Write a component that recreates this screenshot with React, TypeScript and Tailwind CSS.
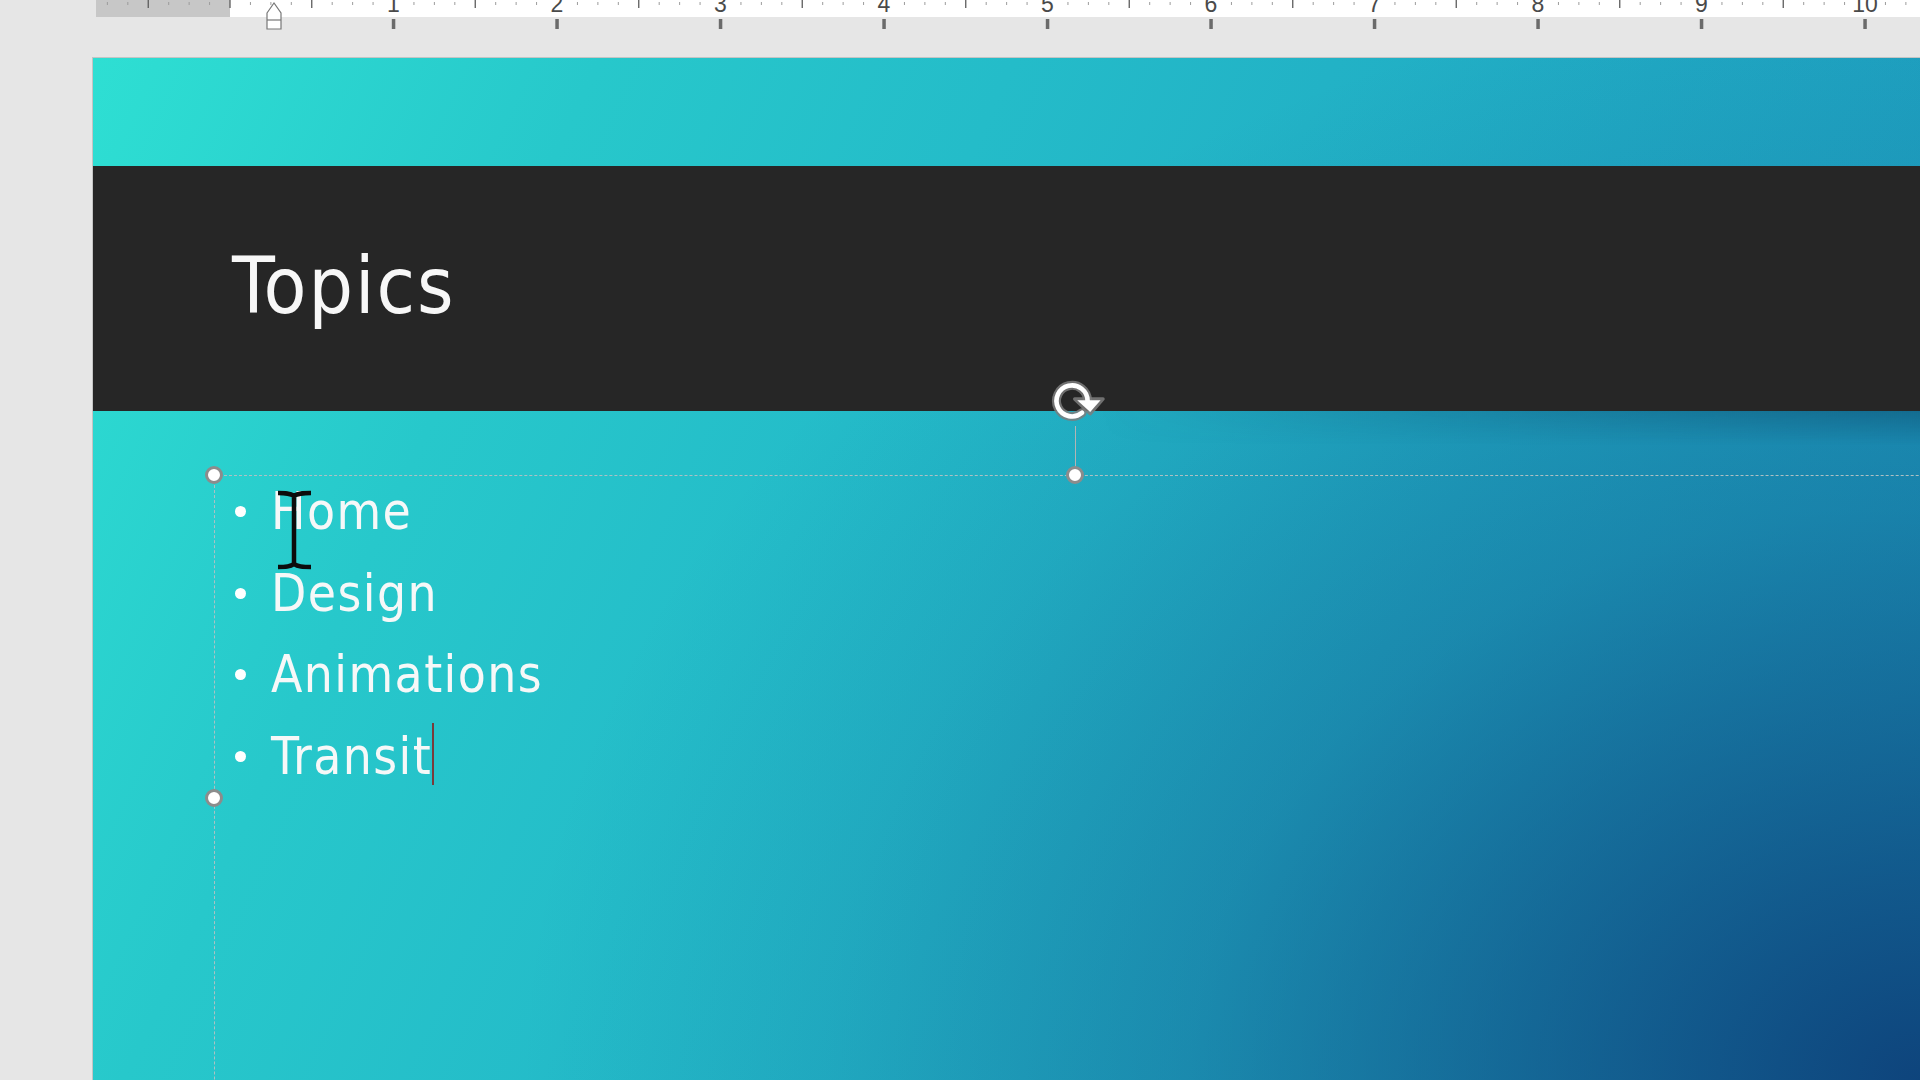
const INCH = 163.5;
const ZERO = 230;

const topics = ["Home", "Design", "Animations", "Transit"];

function Ruler() {
  const marks = [];
  for (let i = -12; i <= 90; i++) {
    const x = ZERO + INCH * (i / 8);
    if (x < 97 || x > 1919) continue;
    if (i % 8 === 0 && i > 0) {
      marks.push(
        <text
          key={i}
          x={x}
          y={12}
          textAnchor="middle"
          fontSize={23}
          fill="#4a4a4a"
          fontFamily="'Liberation Sans', Arial, sans-serif"
        >
          {i / 8}
        </text>
      );
    } else if (i % 4 === 0) {
      marks.push(<line key={i} x1={x} x2={x} y1={0} y2={8} stroke="#5c5c5c" strokeWidth={1.3} />);
    } else {
      marks.push(<line key={i} x1={x} x2={x} y1={2} y2={5} stroke="#9c9c9c" strokeWidth={1} />);
    }
  }

  return (
    <svg width="1920" height="32" viewBox="0 0 1920 32" className="block">
      <rect x="96" y="0" width="134" height="17" fill="#c7c7c7" />
      <rect x="230" y="0" width="1690" height="17" fill="#ffffff" />
      {marks}
      {Array.from({ length: 10 }, (_, k) => (
        <rect key={k} x={ZERO + INCH * (k + 1) - 1.7} y="19" width="3.5" height="10" fill="#6b6b6b" />
      ))}
      <path d="M267 13 L274 3 L281 13 L281 29 L267 29 Z" fill="#ffffff" stroke="#777777" strokeWidth="1.2" />
      <line x1="267" x2="281" y1="20" y2="20" stroke="#777777" strokeWidth="1.2" />
    </svg>
  );
}

function Handle({ className }: { className: string }) {
  return (
    <div
      className={`absolute w-[18px] h-[18px] rounded-full bg-white border-[3px] border-[#8c8c8c] ${className}`}
    />
  );
}

function RotateIcon() {
  const arc = "M27.7 29.2 A12 12 0 1 1 32 20";
  return (
    <svg width="78" height="57" viewBox="0 0 60 44" className="absolute left-[953px] top-[317px]">
      <path d={arc} fill="none" stroke="#7d7d7d" strokeWidth="7" strokeLinecap="round" opacity="0.85" />
      <path d="M22 18.5 L44 18.5 L34 30 Z" fill="#7d7d7d" stroke="#7d7d7d" strokeWidth="2.5" strokeLinejoin="round" opacity="0.85" />
      <path d={arc} fill="none" stroke="#ffffff" strokeWidth="3.6" strokeLinecap="round" />
      <path d="M24 19.5 L42 19.5 L34 28.5 Z" fill="#ffffff" />
    </svg>
  );
}

function IBeam() {
  return (
    <svg width="38" height="82" viewBox="0 0 38 82" className="absolute left-[183px] top-[431px]">
      <path
        d="M2 4 C9 4 14 4 18 7 C22 4 27 4 35 4 M18 6 V76 M2 78 C9 78 14 78 18 75 C22 78 27 78 35 78"
        fill="none"
        stroke="#0c0c0c"
        strokeWidth="4.5"
        strokeLinecap="butt"
      />
    </svg>
  );
}

export default function App() {
  return (
    <div className="w-[1920px] h-[1080px] overflow-hidden bg-[#e6e6e6] font-['DejaVu_Sans_Condensed','DejaVu_Sans',sans-serif] [font-stretch:condensed]">
      <div className="h-[57px]">
        <Ruler />
      </div>

      <div className="relative ml-[92px] h-[1023px] flex flex-col border-l border-t border-[#c4c4c4] bg-[radial-gradient(1400px_1100px_at_100%_100%,rgba(14,68,124,1)_0%,rgba(14,68,124,0.62)_28%,rgba(14,68,124,0.3)_52%,rgba(14,68,124,0.1)_78%,rgba(14,68,124,0)_100%),linear-gradient(115deg,#2edfd3_0%,#27c8cb_22%,#24bcc9_40%,#20a8c3_68%,#1c96bc_100%)]">
        <div className="h-[108px] shrink-0" />

        <div className="h-[245px] shrink-0 bg-[#262626] pl-[139px] pt-[81px]">
          <h1 className="text-[78px] leading-[78px] text-[#f7f7f7] tracking-[0.025em]">Topics</h1>
        </div>

        <ul className="flex flex-col pt-[60px] pl-[142px] text-[51px] leading-[81.5px] tracking-[0.028em] text-[#f6f8f8]">
          {topics.map((t, i) => (
            <li key={t} className="flex items-center">
              <span className="w-[11px] h-[11px] shrink-0 rounded-full bg-white mr-[25px]" />
              <span>
                {t}
                {i === topics.length - 1 && (
                  <span className="inline-block w-[2px] h-[62px] bg-[#7a3b3b] align-[-11px]" />
                )}
              </span>
            </li>
          ))}
        </ul>

        <div className="absolute left-0 right-0 top-[353px] h-[34px] bg-[linear-gradient(to_bottom,rgba(6,40,70,0.3),rgba(6,40,70,0))] [mask-image:linear-gradient(to_right,transparent_55%,black)]" />

        <div className="absolute left-[121px] top-[417px] w-[2000px] h-[800px] border-t border-l border-dashed border-[#aec0c3]" />
        <div className="absolute left-[982px] top-[368px] w-px h-[42px] bg-[#b4b4b4]" />
        <RotateIcon />
        <Handle className="left-[112px] top-[408px]" />
        <Handle className="left-[973px] top-[408px]" />
        <Handle className="left-[112px] top-[731px]" />
        <IBeam />
      </div>
    </div>
  );
}
